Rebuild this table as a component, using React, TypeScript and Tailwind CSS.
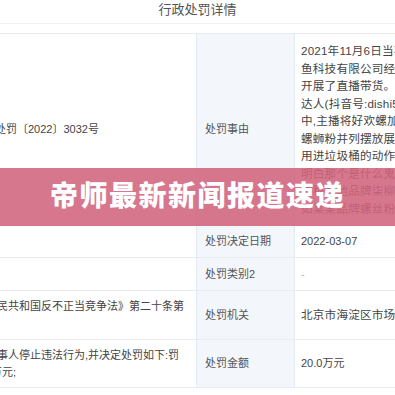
const font = {
  fontFamily: '"Liberation Sans", "Noto Sans CJK SC", sans-serif',
};

const reasonLines = [
  "2021年11月6日当事人在北京",
  "鱼科技有限公司经营的抖音账号",
  "开展了直播带货。该直播间主播",
  "达人(抖音号:dishi5201)，直播过程",
  "中,主播将好欢螺加热后与其他",
  "螺蛳粉并列摆放展示，并做出扔",
  "用进垃圾桶的动作，称“我都不",
  "明白那个是什么鬼”，将柒柳州",
  "并称其他品牌柒柳州螺蛳粉为",
  "如某某品牌螺丝粉粉丝对比",
];

interface Row {
  label: string;
  height: string;
  left: React.ReactNode;
  right: React.ReactNode;
}

const rows: Row[] = [
  {
    label: "处罚事由",
    height: "h-[192px]",
    left: <span className="-ml-[5px]">处罚〔2022〕3032号</span>,
    right: (
      <div className="text-[11.6px] leading-[17.5px] tracking-[0.2px]">
        {reasonLines.map((line) => (
          <div key={line}>{line}</div>
        ))}
      </div>
    ),
  },
  {
    label: "处罚决定日期",
    height: "h-[32px]",
    left: null,
    right: <span>2022-03-07</span>,
  },
  {
    label: "处罚类别2",
    height: "h-[33px]",
    left: null,
    right: <span className="text-[#b5b9bf]">-</span>,
  },
  {
    label: "处罚机关",
    height: "h-[49px]",
    left: (
      <div className="leading-[17px]">
        <div className="-ml-[3px]">民共和国反不正当竞争法》第二十条第</div>
        <div>&nbsp;</div>
      </div>
    ),
    right: (
      <span className="text-[11.6px] tracking-[0.2px]">
        北京市海淀区市场监督管理局
      </span>
    ),
  },
  {
    label: "处罚金额",
    height: "h-[48px]",
    left: (
      <div className="leading-[17px]">
        <div className="-ml-[3px]">事人停止违法行为,并决定处罚如下:罚</div>
        <div className="-ml-[9px]">万元;</div>
      </div>
    ),
    right: <span>20.0万元</span>,
  },
];

const App = () => {
  return (
    <div
      className="relative h-[395px] w-[395px] overflow-hidden bg-white text-[11px] text-[#444]"
      style={font}
    >
      {/* Header */}

      <div className="flex h-[24px] items-center justify-center border-b border-[#eef0f3] pb-[4px] text-[13px] text-[#555]">
        行政处罚详情
      </div>

      <div className="h-[9px]" />

      {/* Table */}

      <div className="border-t border-[#e8ebef]">
        {rows.map((row) => (
          <div
            key={row.label}
            className={`grid grid-cols-[197px_98px_1fr] border-b border-[#e8ebef] ${row.height}`}
          >
            <div className="flex items-center overflow-hidden whitespace-nowrap border-r border-[#e3e9f0]">
              {row.left}
            </div>

            <div className="flex items-center border-r border-[#e3e9f0] bg-[#f3f7fc] pl-[8px] text-[#555]">
              {row.label}
            </div>

            <div className="flex items-center overflow-hidden whitespace-nowrap pl-[6px]">
              {row.right}
            </div>
          </div>
        ))}
      </div>

      {/* Banner */}

      <div className="absolute left-0 top-[168px] flex h-[58px] w-full items-center justify-center bg-[rgba(210,100,125,0.88)]">
        <span className="text-[28px] font-black tracking-[1.5px] text-white">
          帝师最新新闻报道速递
        </span>
      </div>
    </div>
  );
};

export default App;
